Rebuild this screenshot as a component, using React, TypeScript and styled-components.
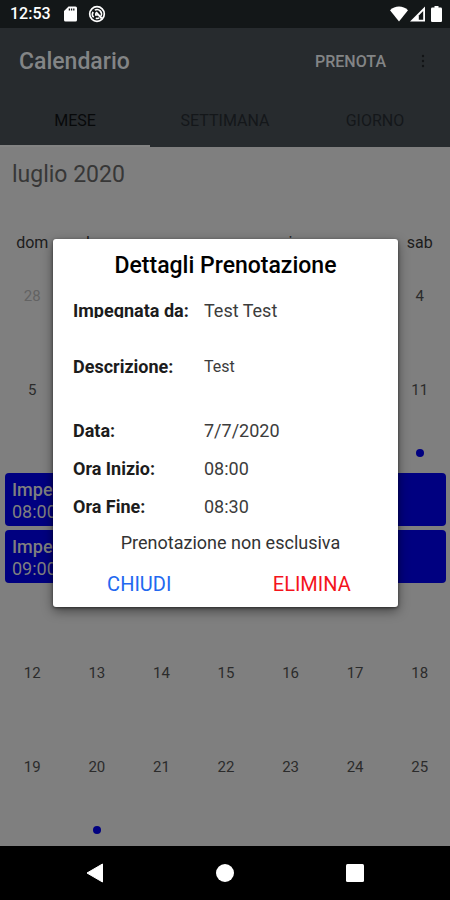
import React from "react";
import styled, { createGlobalStyle } from "styled-components";

const GlobalStyle = createGlobalStyle`
  *, *::before, *::after { box-sizing: border-box; }
  body {
    margin: 0;
    background: #000;
    font-family: Roboto, "Liberation Sans", sans-serif;
  }
  button {
    margin: 0;
    padding: 0;
    border: 0;
    background: none;
    font: inherit;
    color: inherit;
    cursor: pointer;
  }
`;

const Screen = styled.div`
  display: flex;
  flex-direction: column;
  min-height: 100vh;
`;

const AppArea = styled.div`
  position: relative;
  display: flex;
  flex-direction: column;
  flex: 1;
  overflow: hidden;
  background: #7f7f7f;
`;

const StatusBar = styled.div`
  display: flex;
  align-items: center;
  justify-content: space-between;
  height: 28px;
  padding: 0 8px 0 10px;
  background: #131718;
  color: #fff;
`;

const StatusGroup = styled.div<{ $gap: number }>`
  display: flex;
  align-items: center;
  gap: ${(p) => p.$gap}px;
`;

const Clock = styled.span`
  margin-right: 2px;
  font-size: 16px;
  font-weight: 500;
  line-height: 30px;
`;

const Header = styled.header`
  background: #272b2e;
`;

const Toolbar = styled.div`
  display: flex;
  align-items: center;
  height: 66px;
  padding: 0 16px 0 19px;
`;

const AppTitle = styled.h1`
  flex: 1;
  margin: 0;
  font-size: 23px;
  font-weight: 500;
  color: #838586;
`;

const BookButton = styled.button`
  margin-right: 26px;
  font-size: 16px;
  font-weight: 500;
  color: #838586;
`;

const MenuButton = styled.button`
  display: flex;
  justify-content: center;
  width: 22px;
  color: #121416;
`;

const Tabs = styled.nav`
  display: grid;
  grid-template-columns: repeat(3, 1fr);
`;

const Tab = styled.button<{ $active?: boolean }>`
  height: 53px;
  border-top: 2px solid transparent;
  border-bottom: 2px solid ${(p) => (p.$active ? "#838383" : "transparent")};
  font-size: 16px;
  color: ${(p) => (p.$active ? "#07090a" : "#14171a")};
`;

const MonthTitle = styled.h2`
  margin: 0;
  padding: 0 12px;
  font-size: 23px;
  font-weight: 400;
  line-height: 56px;
  color: #373737;
`;

const Week = styled.div`
  display: grid;
  grid-template-columns: repeat(7, 1fr);
  margin-right: -2px;
`;

const WeekdayRow = styled(Week)`
  height: 78px;
  padding-top: 26px;
`;

const Weekday = styled.span`
  font-size: 16px;
  line-height: 28px;
  text-align: center;
  color: #1c1c1c;
`;

const Day = styled.button<{ $muted?: boolean }>`
  display: flex;
  flex-direction: column;
  align-items: center;
  justify-content: space-between;
  height: 94px;
  padding-bottom: 12px;
  font-size: 15px;
  line-height: 30px;
  color: ${(p) => (p.$muted ? "#636363" : "#2b2b2b")};
`;

const EventDot = styled.span`
  width: 8px;
  height: 8px;
  border-radius: 50%;
  background: #000080;
`;

const Events = styled.div`
  display: flex;
  flex-direction: column;
  gap: 4px;
  min-height: 189px;
  padding: 4px 4px 0 5px;
`;

const EventCard = styled.button`
  display: block;
  height: 53px;
  padding: 2px 7px 0;
  border-radius: 4px;
  background: #000080;
  font-size: 18px;
  line-height: 22px;
  text-align: left;
  color: #7f7f7f;
`;

const EventTitle = styled.span`
  display: block;
  font-weight: 500;
`;

const EventTime = styled.span`
  display: block;
`;

const Overlay = styled.div`
  position: absolute;
  inset: 0;
  display: flex;
  align-items: center;
  padding: 0 52px 0 53px;
`;

const Dialog = styled.section`
  flex: 1;
  padding-top: 1px;
  border-radius: 3px;
  background: #fff;
  box-shadow: 0 4px 12px rgba(0, 0, 0, 0.45), 0 1px 3px rgba(0, 0, 0, 0.5);
`;

const DialogTitle = styled.h2`
  margin: 0;
  font-size: 23px;
  font-weight: 500;
  line-height: 52px;
  text-align: center;
  color: #000;
`;

const Details = styled.dl`
  margin: 0;
`;

const Detail = styled.div<{ $height: number }>`
  display: grid;
  grid-template-columns: 131px 1fr;
  align-items: start;
  height: ${(p) => p.$height}px;
  padding: 0 20px;
  line-height: 38px;
`;

const Label = styled.dt<{ $clipped?: boolean }>`
  height: ${(p) => (p.$clipped ? "26px" : "38px")};
  overflow: hidden;
  font-size: 18px;
  font-weight: 700;
  white-space: nowrap;
  color: #1c1c1c;
`;

const Value = styled.dd<{ $small?: boolean }>`
  margin: 0;
  font-size: ${(p) => (p.$small ? 16 : 18)}px;
  color: #3c3c3c;
`;

const Note = styled.p`
  margin: 0;
  padding-left: 10px;
  font-size: 18px;
  line-height: 34px;
  text-align: center;
  color: #333;
`;

const Actions = styled.div`
  display: grid;
  grid-template-columns: 1fr 1fr;
`;

const Action = styled.button<{ $color: string }>`
  height: 47px;
  font-size: 20px;
  color: ${(p) => p.$color};
`;

const NavBar = styled.nav`
  display: flex;
  align-items: center;
  justify-content: center;
  gap: 106px;
  height: 54px;
  background: #000;
`;

const NavButton = styled.button`
  display: flex;
  justify-content: center;
  width: 24px;
`;

type DayInfo = { n: number; muted?: boolean; dot?: boolean };

const weekdays = ["dom", "lun", "mar", "mer", "gio", "ven", "sab"];

const weeks: DayInfo[][] = [
  [{ n: 28, muted: true }, { n: 29, muted: true }, { n: 30, muted: true }, { n: 1 }, { n: 2 }, { n: 3 }, { n: 4 }],
  [{ n: 5 }, { n: 6 }, { n: 7 }, { n: 8 }, { n: 9 }, { n: 10 }, { n: 11, dot: true }],
  [{ n: 12 }, { n: 13 }, { n: 14 }, { n: 15 }, { n: 16 }, { n: 17 }, { n: 18 }],
  [{ n: 19 }, { n: 20, dot: true }, { n: 21 }, { n: 22 }, { n: 23 }, { n: 24 }, { n: 25 }],
];

const events = ["08:00", "09:00"];
const openWeek = 1;

const SdCardIcon = () => (
  <svg width="13" height="16" viewBox="0 0 13 16" aria-hidden="true">
    <path d="M4.500 0.500h7a1.500 1.500 0 0 1 1.500 1.500v12a1.500 1.500 0 0 1-1.500 1.500h-10a1.500 1.500 0 0 1-1.500-1.500V5z" fill="#fff" />
    <path d="M5.400 2.500v2M7.600 2.500v2M9.800 2.500v2" stroke="#131718" strokeWidth="1.300" />
  </svg>
);

const SyncIcon = () => (
  <svg width="18" height="18" viewBox="0 0 18 18" fill="none" stroke="#fff" aria-hidden="true">
    <circle cx="9" cy="9" r="7.300" strokeWidth="1.700" />
    <path d="M5.700 12.300A4.500 4.500 0 0 1 5.100 6.800M6.800 5.100a4.500 4.500 0 0 1 6.100 6.100M11.300 12.900a4.500 4.500 0 0 1-3.500.400" strokeWidth="1.600" />
    <path d="M8 7.200l5.800 6.300" strokeWidth="1.900" />
    <path d="M7 7.600l3.200 3.200H7z" fill="#fff" stroke="none" />
  </svg>
);

const WifiIcon = () => (
  <svg width="18" height="16" viewBox="0 0 18 16" aria-hidden="true">
    <path d="M9 15.500L0 4.300C2.500 1.700 5.600.5 9 .5s6.500 1.200 9 3.800z" fill="#fff" />
  </svg>
);

const SignalIcon = () => (
  <svg width="15" height="16" viewBox="0 0 15 16" aria-hidden="true">
    <path d="M15 0.500v15H0z" fill="#fff" />
    <path d="M13.200 5v8.700H8.800V9.600z" fill="#131718" />
  </svg>
);

const BatteryIcon = () => (
  <svg width="11" height="16" viewBox="0 0 11 16" aria-hidden="true">
    <path d="M3.500 0h4v1.600H9.500A1.400 1.400 0 0 1 11 3v11.500A1.400 1.400 0 0 1 9.500 16h-8A1.400 1.400 0 0 1 0 14.500V3a1.400 1.400 0 0 1 1.500-1.400h2z" fill="#fff" />
  </svg>
);

export default function App() {
  return (
    <>
      <GlobalStyle />
      <Screen>
        <AppArea>
          <StatusBar>
            <StatusGroup $gap={11}>
              <Clock>12:53</Clock>
              <SdCardIcon />
              <SyncIcon />
            </StatusGroup>
            <StatusGroup $gap={2}>
              <WifiIcon />
              <StatusGroup $gap={6}>
                <SignalIcon />
                <BatteryIcon />
              </StatusGroup>
            </StatusGroup>
          </StatusBar>
          <Header>
            <Toolbar>
              <AppTitle>Calendario</AppTitle>
              <BookButton type="button">PRENOTA</BookButton>
              <MenuButton type="button" aria-label="Altre opzioni">
                <svg width="4" height="16" viewBox="0 0 4 16" fill="currentColor" aria-hidden="true">
                  <circle cx="2" cy="3" r="1.200" />
                  <circle cx="2" cy="8" r="1.200" />
                  <circle cx="2" cy="13" r="1.200" />
                </svg>
              </MenuButton>
            </Toolbar>
            <Tabs>
              <Tab type="button" $active>MESE</Tab>
              <Tab type="button">SETTIMANA</Tab>
              <Tab type="button">GIORNO</Tab>
            </Tabs>
          </Header>
          <main>
            <MonthTitle>luglio 2020</MonthTitle>
            <WeekdayRow>
              {weekdays.map((name) => (
                <Weekday key={name}>{name}</Weekday>
              ))}
            </WeekdayRow>
            {weeks.map((week, index) => (
              <React.Fragment key={index}>
                <Week>
                  {week.map((day) => (
                    <Day key={day.n} type="button" $muted={day.muted}>
                      {day.n}
                      {day.dot && <EventDot />}
                    </Day>
                  ))}
                </Week>
                {index === openWeek && (
                  <Events>
                    {events.map((time) => (
                      <EventCard key={time} type="button">
                        <EventTitle>Impegnata</EventTitle>
                        <EventTime>{time}</EventTime>
                      </EventCard>
                    ))}
                  </Events>
                )}
              </React.Fragment>
            ))}
          </main>
          <Overlay>
            <Dialog role="dialog" aria-modal="true" aria-labelledby="dialog-title">
              <DialogTitle id="dialog-title">Dettagli Prenotazione</DialogTitle>
              <Details>
                <Detail $height={56}>
                  <Label $clipped>Impegnata da:</Label>
                  <Value>Test Test</Value>
                </Detail>
                <Detail $height={64}>
                  <Label>Descrizione:</Label>
                  <Value $small>Test</Value>
                </Detail>
                <Detail $height={38}>
                  <Label>Data:</Label>
                  <Value>7/7/2020</Value>
                </Detail>
                <Detail $height={38}>
                  <Label>Ora Inizio:</Label>
                  <Value>08:00</Value>
                </Detail>
                <Detail $height={38}>
                  <Label>Ora Fine:</Label>
                  <Value>08:30</Value>
                </Detail>
              </Details>
              <Note>Prenotazione non esclusiva</Note>
              <Actions>
                <Action type="button" $color="#2268f0">CHIUDI</Action>
                <Action type="button" $color="#f4141c">ELIMINA</Action>
              </Actions>
            </Dialog>
          </Overlay>
        </AppArea>
        <NavBar>
          <NavButton type="button" aria-label="Indietro">
            <svg width="18" height="20" viewBox="0 0 18 20" aria-hidden="true">
              <path d="M16.500 1v18L1 10z" fill="#fff" stroke="#fff" strokeLinejoin="round" />
            </svg>
          </NavButton>
          <NavButton type="button" aria-label="Home">
            <svg width="18" height="18" viewBox="0 0 18 18" aria-hidden="true">
              <circle cx="9" cy="9" r="9" fill="#fff" />
            </svg>
          </NavButton>
          <NavButton type="button" aria-label="App recenti">
            <svg width="18" height="18" viewBox="0 0 18 18" aria-hidden="true">
              <rect width="18" height="18" rx="1.500" fill="#fff" />
            </svg>
          </NavButton>
        </NavBar>
      </Screen>
    </>
  );
}
